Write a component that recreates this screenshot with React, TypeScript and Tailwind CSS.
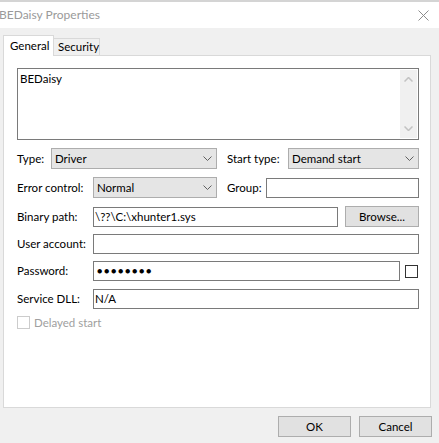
import type { ReactNode } from 'react'

// Chevron for combo boxes
function Chevron() {
  return (
    <svg width="9" height="5" viewBox="0 0 9 5" className="shrink-0">
      <path d="M0.5 0.5 L4.5 4.5 L8.5 0.5" fill="none" stroke="#606060" strokeWidth="1" />
    </svg>
  )
}

function Combo({ value, className }: { value: string; className: string }) {
  return (
    <div
      className={`flex h-[21px] items-center justify-between border border-[#adadad] bg-[#e5e5e5] pl-[3px] pr-[4px] ${className}`}
    >
      <span>{value}</span>
      <Chevron />
    </div>
  )
}

function Field({ className, children }: { className: string; children?: ReactNode }) {
  return (
    <div className={`flex h-[20px] items-center border border-[#7a7a7a] bg-white pl-[1px] ${className}`}>
      {children}
    </div>
  )
}

function Button({ label, className }: { label: string; className: string }) {
  return (
    <div
      className={`flex h-[21px] items-center justify-center border border-[#adadad] bg-[#e1e1e1] ${className}`}
    >
      {label}
    </div>
  )
}

export default function App() {
  return (
    <div className="flex h-[443px] w-[439px] flex-col overflow-hidden bg-[#f0f0f0] font-['Lato','Liberation_Sans',sans-serif] text-[11.5px] text-black">
      {/* Заголовок окна */}
      <div className="h-[2px] bg-[#d4d4d4]" />
      <div className="flex h-[26px] items-center justify-between bg-white">
        <span className="-ml-px text-[12px] text-[#9a9a9a]">BEDaisy Properties</span>
        <svg width="11" height="11" viewBox="0 0 11 11" className="mr-[10px]">
          <path d="M0.5 0.5 L10.5 10.5 M10.5 0.5 L0.5 10.5" stroke="#8c8c8c" strokeWidth="1" />
        </svg>
      </div>

      {/* Вкладки */}
      <div className="flex h-[20px] items-end pl-[3px] mt-[7px]">
        <div className="relative z-10 -mb-px flex h-[21px] w-[51px] items-center border border-b-0 border-[#d9d9d9] bg-white pl-[6px]">
          General
        </div>
        <div className="flex h-[17px] w-[46px] items-center border border-b-0 border-l-0 border-[#d9d9d9] bg-[#f0f0f0] pl-[4px]">
          Security
        </div>
      </div>

      {/* Панель General */}
      <div className="ml-[3px] flex h-[353px] w-[428px] flex-col border border-[#d9d9d9] bg-white pl-[13px] pt-[12px]">
        <div className="flex h-[72px] w-[402px] border border-[#7a7a7a]">
          <div className="flex-1 pl-[2px] pt-[1px]">BEDaisy</div>
          <div className="my-px mr-px flex w-[17px] flex-col items-center justify-between bg-[#f0f0f0] py-[7px]">
            <svg width="9" height="5" viewBox="0 0 9 5">
              <path d="M0.5 4.5 L4.5 0.5 L8.5 4.5" fill="none" stroke="#c2c2c2" strokeWidth="1.5" />
            </svg>
            <svg width="9" height="5" viewBox="0 0 9 5">
              <path d="M0.5 0.5 L4.5 4.5 L8.5 0.5" fill="none" stroke="#c2c2c2" strokeWidth="1.5" />
            </svg>
          </div>
        </div>

        <div className="mt-[8px] flex items-center">
          <span className="w-[34px]">Type:</span>
          <Combo value="Driver" className="w-[166px]" />
          <span className="ml-[10px] w-[61px]">Start type:</span>
          <Combo value="Demand start" className="w-[131px]" />
        </div>

        <div className="mt-[8px] flex items-center">
          <span className="w-[76px]">Error control:</span>
          <Combo value="Normal" className="w-[124px]" />
          <span className="ml-[10px] w-[39px]">Group:</span>
          <Field className="w-[153px]" />
        </div>

        <div className="mt-[8px] flex items-center">
          <span className="w-[76px]">Binary path:</span>
          <Field className="w-[245px]">\??\C:\xhunter1.sys</Field>
          <Button label="Browse..." className="ml-[7px] w-[74px]" />
        </div>

        <div className="mt-[7px] flex items-center">
          <span className="w-[76px]">User account:</span>
          <Field className="w-[326px]" />
        </div>

        <div className="mt-[7px] flex items-center">
          <span className="w-[76px]">Password:</span>
          <Field className="w-[307px]">
            <span className="pl-[2px] text-[9px] tracking-[1.6px]">●●●●●●●●</span>
          </Field>
          <div className="ml-[5px] h-[13px] w-[13px] border border-[#333333] bg-white" />
        </div>

        <div className="mt-[8px] flex items-center">
          <span className="w-[76px]">Service DLL:</span>
          <Field className="w-[326px]">N/A</Field>
        </div>

        <div className="mt-[5px] flex items-center text-[#a0a0a0]">
          <div className="h-[13px] w-[13px] border border-[#cccccc] bg-white" />
          <span className="ml-[4px]">Delayed start</span>
        </div>
      </div>

      {/* Кнопки */}
      <div className="mt-[8px] flex justify-end gap-[8px] pr-[7px]">
        <Button label="OK" className="w-[73px]" />
        <Button label="Cancel" className="w-[73px]" />
      </div>
    </div>
  )
}
